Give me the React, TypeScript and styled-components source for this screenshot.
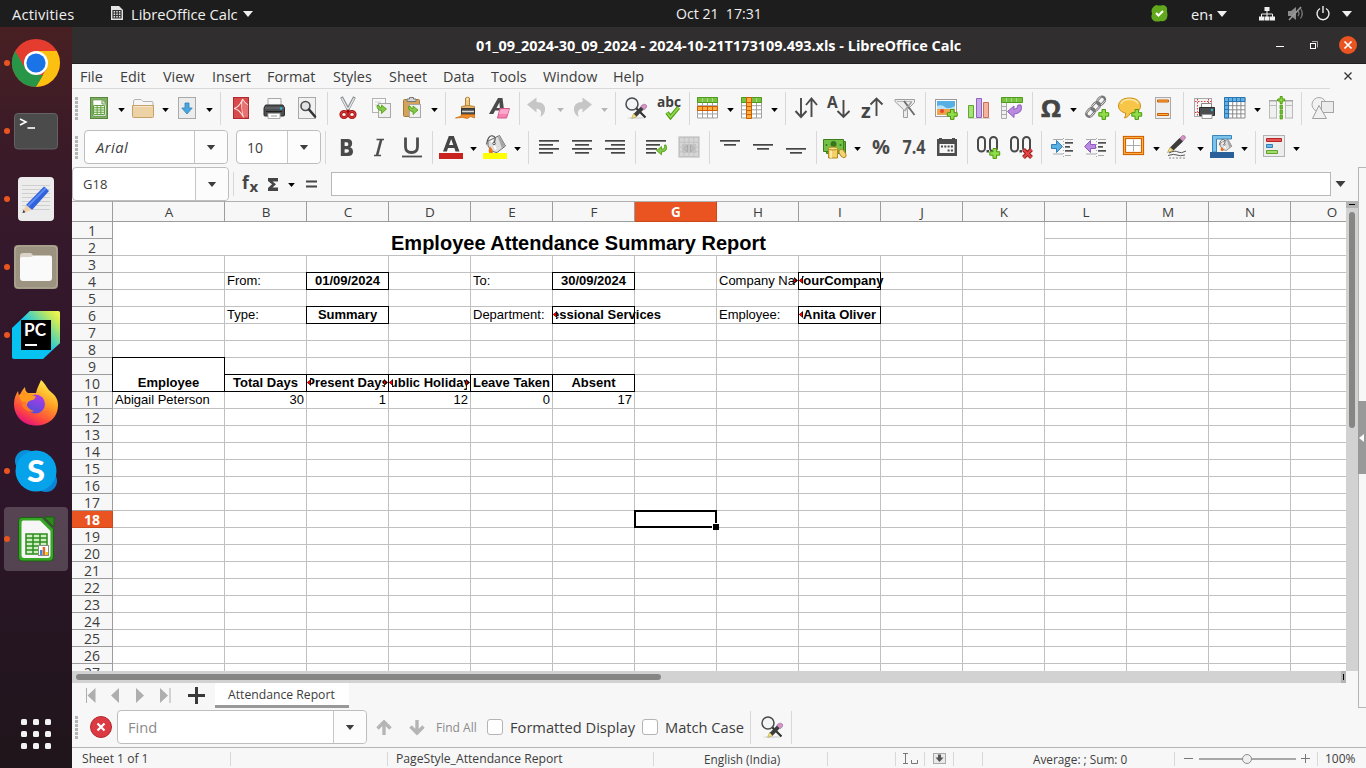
import React from 'react';
import styled, { createGlobalStyle, css } from 'styled-components';

const ui = `"Open Sans", "Noto Sans", sans-serif`;
const ink = '#3d3d3d';
const line = '#c0c0c0';
const chrome = '#f7f7f7';
const orange = '#e95420';

const Global = createGlobalStyle`
  * { box-sizing: border-box; }
  body { margin: 0; background: #f7f7f7; overflow: hidden; font-family: ${ui}; }
  svg { display: block; flex: none; overflow: visible; }
`;

/* ---------- shell ---------- */
const Screen = styled.div`
  width: 1366px;
  height: 768px;
  display: flex;
  flex-direction: column;
  overflow: hidden;
`;
const Label = styled.span<{ $w: number; $size?: number; $ls?: number; $ml?: number; $color?: string; $bold?: boolean; $italic?: boolean }>`
  flex: none;
  width: ${p => p.$w}px;
  margin-left: ${p => p.$ml ?? 0}px;
  font-size: ${p => p.$size ?? 14.67}px;
  letter-spacing: ${p => p.$ls ?? 0}px;
  color: ${p => p.$color ?? ink};
  font-weight: ${p => (p.$bold ? 700 : 400)};
  font-style: ${p => (p.$italic ? 'italic' : 'normal')};
  white-space: nowrap;
`;
const TopBar = styled.header`
  height: 27px;
  flex: none;
  background: #1d1d1d;
  display: flex;
  align-items: center;
`;
const Slot = styled.span<{ $ml?: number; $drop?: number }>`
  margin-left: ${p => p.$ml ?? 0}px;
  padding-top: ${p => p.$drop ?? 0}px;
  flex: none;
  display: flex;
`;
const Desktop = styled.div`
  flex: 1;
  display: flex;
  min-height: 0;
`;
const Dock = styled.nav`
  width: 72px;
  flex: none;
  padding-top: 4px;
  display: flex;
  flex-direction: column;
  gap: 4px;
  background: linear-gradient(180deg, #482023 0%, #3c1b27 14%, #34182b 30%, #2f162b 60%, #241520 85%, #20151b 100%);
`;
const DockItem = styled.div<{ $active?: boolean; $last?: boolean }>`
  width: 64px;
  height: 64px;
  margin-left: 4px;
  margin-top: ${p => (p.$last ? 'auto' : 0)};
  margin-bottom: ${p => (p.$last ? 2 : 0)}px;
  border-radius: 4px;
  background: ${p => (p.$active ? 'rgba(255,255,255,.2)' : 'none')};
  display: flex;
  align-items: center;
  justify-content: center;
  position: relative;
`;
const RunDot = styled.i`
  position: absolute;
  left: 0;
  top: 29px;
  width: 6px;
  height: 6px;
  border-radius: 50%;
  background: ${orange};
`;
const Window = styled.main`
  flex: 1;
  min-width: 0;
  background: ${chrome};
  display: flex;
  flex-direction: column;
`;
const TitleBar = styled.div`
  height: 37px;
  flex: none;
  background: #302e2f;
  border-bottom: 1px solid #211f20;
  display: flex;
  align-items: center;
`;
const CloseButton = styled.span`
  width: 18px;
  height: 18px;
  margin-left: 18px;
  border-radius: 50%;
  background: ${orange};
  display: flex;
  align-items: center;
  justify-content: center;
`;
const MenuBar = styled.div`
  height: 24px;
  flex: none;
  display: flex;
  align-items: center;
`;
const MenuRule = styled.div`
  height: 1px;
  width: 1258px;
  flex: none;
  background: #d9d9d9;
`;

/* ---------- toolbars ---------- */
const Toolbar = styled.div<{ $h: number }>`
  height: ${p => p.$h}px;
  flex: none;
  display: flex;
  align-items: center;
`;
const Grip = styled.i`
  width: 3px;
  height: 23px;
  margin: 0 0 0 3px;
  flex: none;
  background: repeating-linear-gradient(180deg, #b5b5b5 0 3px, transparent 3px 4px);
`;
const Group = styled.div<{ $first?: number }>`
  height: 33px;
  flex: none;
  padding: 0 8px;
  display: flex;
  align-items: center;
  gap: 9px;
  border-left: 1px solid #d8d8d8;
  ${p => p.$first !== undefined && css`border-left-color: transparent; padding-left: ${p.$first}px;`}
`;
const SplitBox = styled.span`
  width: 35px;
  margin: 0 2px 0 -2px;
  flex: none;
  display: flex;
  align-items: center;
  gap: 7px;
`;
const Combo = styled.div<{ $w: number; $ml: number; $h?: number }>`
  width: ${p => p.$w}px;
  height: ${p => p.$h ?? 34}px;
  margin-left: ${p => p.$ml}px;
  flex: none;
  background: #fff;
  border: 1px solid #bdbdbd;
  border-radius: 4px;
  display: flex;
  align-items: center;
`;
const ComboButton = styled.span<{ $w: number }>`
  width: ${p => p.$w}px;
  align-self: stretch;
  margin-left: auto;
  border-left: 1px solid #c6c6c6;
  background: #fcfcfc;
  border-radius: 0 4px 4px 0;
  display: flex;
  align-items: center;
  justify-content: center;
`;
const Body = styled.div`
  height: 541px;
  flex: none;
  display: flex;
`;
const Editor = styled.section`
  width: 1286px;
  flex: none;
  display: flex;
  flex-direction: column;
`;
const Sidebar = styled.aside`
  flex: 1;
  border: 1px solid #b6b6b6;
  border-right: 0;
  display: flex;
  align-items: center;
`;
const Handle = styled.div`
  width: 8px;
  height: 73px;
  margin: 0 0 0 -1px;
  background: #999;
  display: flex;
  align-items: center;
`;
const FormulaBar = styled.div`
  height: 34px;
  flex: none;
  display: flex;
  align-items: center;
`;
const FormulaInput = styled.div`
  width: 1000px;
  height: 24px;
  margin-left: 14px;
  flex: none;
  background: #fff;
  border: 1px solid #b8b8b8;
`;
const ThinSep = styled.i<{ $ml: number; $h?: number }>`
  width: 1px;
  height: ${p => p.$h ?? 24}px;
  margin-left: ${p => p.$ml}px;
  flex: none;
  background: #d8d8d8;
`;

/* ---------- sheet ---------- */
const SheetRow = styled.div`
  height: 470px;
  flex: none;
  display: flex;
`;
const Grid = styled.div`
  width: 1274px;
  height: 470px;
  overflow: hidden;
  flex: none;
  background: #fff;
  display: grid;
  grid-template-columns: 41px 112px repeat(14, 82px);
  grid-template-rows: 21px repeat(27, 17px);
`;
const headBox = css<{ $on?: boolean }>`
  background: ${p => (p.$on ? orange : chrome)};
  border-right: 1px solid ${p => (p.$on ? '#c9491c' : '#9c9c9c')};
  border-bottom: 1px solid ${p => (p.$on ? '#c9491c' : '#9c9c9c')};
  color: ${p => (p.$on ? '#fff' : ink)};
  font: ${p => (p.$on ? 700 : 400)} 13.5px/16px ${ui};
  text-align: center;
`;
const ColHead = styled.div<{ $on?: boolean }>`
  ${headBox}
  border-top: 1px solid #b0b0b0;
  line-height: 20px;
  font-size: 13.5px;
  padding-left: 1px;
`;
const RowHead = styled.div<{ $on?: boolean }>`
  ${headBox}
  line-height: 18px;
  font-size: 14px;
`;
const Cell = styled.div<{ $align?: string; $bold?: boolean; $box?: boolean; $merged?: 'title' | 'tall' }>`
  border-right: 1px solid ${line};
  border-bottom: 1px solid ${line};
  display: flex;
  align-items: center;
  padding: 0 2px 2px;
  justify-content: ${p => p.$align ?? 'flex-start'};
  font: ${p => (p.$bold ? 700 : 400)} 13px/15px "Liberation Sans", Arial, sans-serif;
  color: #000;
  white-space: nowrap;
  min-width: 0;
  position: relative;
  ${p => p.$box && css`
    border-color: #000;
    z-index: 1;
    &::before { content: ''; position: absolute; inset: -1px; border: 1px solid #000; border-right: 0; border-bottom: 0; }
  `}
  ${p => p.$merged === 'title' && css`
    grid-column: 2 / span 11;
    grid-row: 2 / span 2;
    font-size: 20px;
    padding: 9px 2px 0;
  `}
  ${p => p.$merged === 'tall' && css`
    grid-column: 2;
    grid-row: 10 / span 2;
    align-items: flex-end;
    padding-bottom: 1px;
  `}
`;
const CellText = styled.span<{ $clip?: string }>`
  flex: none;
  ${p => p.$clip && css`
    width: 81px;
    margin: 0 -2px;
    display: flex;
    justify-content: ${p.$clip === 'left' ? 'flex-start' : 'center'};
    padding-left: ${p.$clip === 'left' ? 2 : 0}px;
    clip-path: inset(0 ${p.$clip === 'spill' ? '-40px' : p.$clip === 'fit' ? '0' : '3px'} -2px ${p.$clip === 'left' ? 0 : 3}px);
  `}
`;
const Marker = styled.i<{ $side: 'left' | 'right' }>`
  position: absolute;
  top: 4px;
  ${p => (p.$side === 'left' ? 'left: 0;' : 'right: 0;')}
`;
const Cursor = styled.div`
  margin: -1px 0 0 -1px;
  grid-column: 8;
  grid-row: 19;
  z-index: 2;
  position: relative;
  border: 2px solid #000;
  &::after { content: ''; position: absolute; right: -4px; bottom: -4px; width: 6px; height: 6px; background: #000; border: solid #fff; border-width: 1px 0 0 1px; }
`;
const VScroll = styled.div`
  width: 12px;
  background: #d2d2d2;
`;
const VThumb = styled.div`
  width: 6px;
  height: 216px;
  margin: 4px 0 0 3px;
  border-radius: 3px;
  background: #868785;
`;
const ScrollEnd = styled.div<{ $w: number; $h: number }>`
  width: ${p => p.$w}px;
  height: ${p => p.$h}px;
  background: #b3b3b3;
  display: flex;
  align-items: center;
  justify-content: center;
`;
const Tick = styled.i<{ $w: number; $h: number }>`
  width: ${p => p.$w}px;
  height: ${p => p.$h}px;
  background: #000;
`;
const HScroll = styled.div`
  width: 1274px;
  height: 12px;
  flex: none;
  background: #d2d2d2;
  display: flex;
  align-items: center;
  justify-content: space-between;
`;
const HThumb = styled.div`
  width: 585px;
  height: 6px;
  margin-left: 4px;
  border-radius: 3px;
  background: #868785;
`;
const TabBar = styled.div`
  height: 25px;
  flex: none;
  display: flex;
  align-items: center;
`;
const Tab = styled.div`
  width: 134px;
  height: 25px;
  margin-left: 10px;
  background: #fff;
  border-bottom: 3px solid #999;
  display: flex;
  align-items: center;
`;
const FindBar = styled.div`
  height: 39px;
  flex: none;
  display: flex;
  align-items: center;
  padding-bottom: 1px;
`;
const Check = styled.span<{ $ml: number }>`
  width: 16px;
  height: 16px;
  margin-left: ${p => p.$ml}px;
  flex: none;
  background: #fff;
  border: 1px solid #b4b4b4;
  border-radius: 3px;
`;
const StatusBar = styled.footer`
  flex: 1;
  border-top: 1px solid #b4b4b4;
  display: flex;
  align-items: center;
  padding-top: 1px;
`;

/* ---------- icons ---------- */
const I = ({ children, w = 24, h = 24, vb }: { children: React.ReactNode; w?: number; h?: number; vb?: string }) => (
  <svg width={w} height={h} viewBox={vb ?? `0 0 ${w} ${h}`} fill="none">{children}</svg>
);
const Caret = ({ w = 7, h = 4, c = '#000' }: { w?: number; h?: number; c?: string }) => (
  <I w={w} h={h} vb="0 0 10 6"><path d="M0 0h10L5 6z" fill={c} /></I>
);
const Split = ({ children, dim }: { children: React.ReactNode; dim?: boolean }) => (
  <SplitBox>{children}<Slot $drop={3}><Caret c={dim ? '#b5b5b5' : '#000'} /></Slot></SplitBox>
);
const gridLines = (x: number, y: number, w: number, h: number, cols: number, rows: number) => {
  let d = `M${x} ${y}h${w}v${h}h${-w}z`;
  for (let i = 1; i < cols; i++) d += `M${x + (w / cols) * i} ${y}v${h}`;
  for (let i = 1; i < rows; i++) d += `M${x} ${y + (h / rows) * i}h${w}`;
  return d;
};
const Plus = ({ x, y }: { x: number; y: number }) => (
  <path transform={`translate(${x} ${y})`} d="M3.500.5h3.500v3.200h3.200v3.500H7v3.200H3.500V7.200H.3V3.700h3.200z" fill="#8fdc4f" stroke="#4e9a06" />
);
const NewSheet = () => <I><rect x="3.500" y="1.500" width="17" height="21" fill="#7fae62" stroke="#57863c" /><path d="M6 4h9l4 4v12H6z" fill="#fff" stroke="#4f7d38" strokeWidth=".5" /><path d="M15 4v4h4" fill="#dbe8d2" stroke="#6d9956" /><path d={gridLines(6.5, 9.5, 11, 9, 3, 4)} fill="#eef7e8" stroke="#62a03f" /></I>;
const Folder = () => <I><path d="M2.500 20V4.500L4 3.500h6l2 2h9q1 0 1 1V20" fill="#f6f6f6" stroke="#b3b3b3" /><path d="M1.500 9.500h21v11q0 1-1 1h-19q-1 0-1-1z" fill="#ecd2a5" stroke="#c6a06a" /><path d="M3 10.500h18" stroke="#f8e8cb" /></I>;
const Save = () => <I><rect x="3.500" y="1.500" width="17" height="21" fill="#ececec" stroke="#a9a9a9" /><path d="M10 7h4v5h3.200L12 18 6.800 12H10z" fill="#4aa6dd" stroke="#2f84bd" strokeWidth=".8" /></I>;
const Pdf = () => <I><rect x="4.500" y="1.500" width="15" height="21" fill="#d94b4b" stroke="#b02a2e" /><path d="M5 12.500q5-1 8.500-9M5 12.500q5.500 1 9 8M13.500 3q-2 9 1.500 18.500M13.500 3q2 4 5.500 6" stroke="#fbe3e3" strokeWidth="1.100" /><path d="M14 4q-2 9 1 17h4V9q-3.500-1-5-5z" fill="#e77272" /></I>;
const Printer = () => <I><path d="M6 2.500h13V11H6z" fill="#f8f8f8" stroke="#a8a8a8" /><path d="M3.500 9h17.500l1.500 3v7q0 1-1 1H3q-1 0-1-1v-7z" fill="#4c4f50" stroke="#2c2c2c" /><path d="M3 12h19" stroke="#737678" /><path d="M4 15.500h16" stroke="#222" /><circle cx="19" cy="12.500" r="1.200" fill="#33b5e5" /><path d="M6 17.500h12v5H6z" fill="#fff" stroke="#aaa" /><path d="M9 20h6" stroke="#999" /></I>;
const Preview = () => <I><rect x="3.500" y="1.500" width="17" height="21" fill="#f1f1f1" stroke="#a9a9a9" /><circle cx="10.500" cy="10" r="4.500" fill="#dfe3e5" stroke="#4d4d4d" strokeWidth="1.600" /><path d="M14 13.500l6 7" stroke="#333" strokeWidth="2.600" strokeLinecap="round" /></I>;
const Cut = () => <I><path d="M5.500 1l7.500 14M18.500 1L11 15" stroke="#8a8f91" strokeWidth="3" /><path d="M5.800 2l6.400 12M18.200 2l-6.400 12" stroke="#e8eaeb" strokeWidth="1.300" /><path d="M11 14.500l2 1" stroke="#a40000" strokeWidth="3" /><ellipse cx="8" cy="18.500" rx="3.200" ry="3" stroke="#a81414" strokeWidth="2.800" /><ellipse cx="16" cy="18.500" rx="3.200" ry="3" stroke="#a81414" strokeWidth="2.800" /><ellipse cx="8" cy="18.500" rx="3.200" ry="3" stroke="#e04040" /><ellipse cx="16" cy="18.500" rx="3.200" ry="3" stroke="#e04040" /></I>;
const GreenTurn = ({ x, y }: { x: number; y: number }) => <path transform={`translate(${x} ${y})`} d="M.5 1Q.5 6 5 6V9L10 4.500 5 .5V3Q3 3.500 2.500 1z" fill="#82c94d" stroke="#4e9a06" strokeWidth=".8" />;
const Copy = () => <I><rect x="3.500" y="2.500" width="13" height="14" fill="#fafafa" stroke="#b2b2b2" /><path d="M6 6h6M6 9h6" stroke="#d0d0d0" /><rect x="9.500" y="7.500" width="12" height="14" fill="#f0f0f0" stroke="#a8a8a8" /><GreenTurn x={7.500} y={8.500} /></I>;
const Paste = () => <I><rect x="3.500" y="3.500" width="16" height="17" rx="1" fill="#d3a25c" stroke="#a9793a" /><path d="M7 5.500V3h2.500V1.500h4V3H16v2.500z" fill="#d5d5d5" stroke="#777" /><rect x="9.500" y="8.500" width="11" height="13" fill="#f0f0f0" stroke="#a8a8a8" /><GreenTurn x={8} y={9.500} /></I>;
const Brush = () => <I><path d="M11.500 2q2-1.500 4 0v8h-4z" fill="#f1c987" stroke="#b78237" /><circle cx="13.500" cy="3" r=".8" fill="#fff" /><path d="M7.500 10.500q6-2 13 0v4h-13z" fill="#e9b96e" stroke="#b78237" /><path d="M7.500 12.500h13v6h-13z" fill="#4b4b4b" stroke="#333" /><path d="M8 15.500h12" stroke="#d9d9d9" strokeWidth="1.500" /><path d="M7.500 18.500h13V22l-4-1.500-3 2-5-1-7 .5q2-1 5-1.500z" fill="#f08b25" stroke="#c66a0a" strokeWidth=".7" /></I>;
const ClearFormat = () => <I><path fillRule="evenodd" d="M2 18L11 2h4.500l2 16h-4l-.4-3.500H8.200L6.300 18zM9.500 12h3.400l-.5-5.500z" fill="#4a4a4a" /><path d="M13 12.500h9.500l-3 9.500h-9z" fill="#f583b1" stroke="#d6568c" /><path d="M13.500 13.500l-1.600 4.500h8.600l1.500-4.800z" fill="#fba9ca" /></I>;
const Undo = () => <I><path d="M1 8.500L10.500 1.500v4.500q9 0 8.500 8-.3 4-4.500 7 2.500-8-4-8.500v4z" fill="#c6c6c6" /></I>;
const Redo = () => <I><g transform="matrix(-1 0 0 1 23 0)"><path d="M1 8.500L10.500 1.500v4.500q9 0 8.500 8-.3 4-4.500 7 2.500-8-4-8.500v4z" fill="#c6c6c6" /></g></I>;
const FindReplace = () => <I><ellipse cx="12" cy="22" rx="9" ry="1.200" fill="#dedede" /><circle cx="8" cy="8" r="6" fill="#f2f4f5" stroke="#4a4a4a" strokeWidth="1.500" /><path d="M12.500 12.500l9 9" stroke="#333" strokeWidth="2.200" /><path d="M9.500 18L17 10.500l2.800 2.800L12.300 21z" fill="#3c3c3c" /><path d="M9.500 17.500l3 3.200-4.800 1.800z" fill="#f4e28b" stroke="#a58b2e" strokeWidth=".5" /><path d="M18 9q3.500-2 4.800 1-.5 2.800-2.300 3.600L16.800 10.500z" fill="#d595c7" stroke="#9b5b8e" strokeWidth=".6" /></I>;
const Spell = () => <I><text x="0" y="11" fontFamily="Open Sans" fontWeight="700" fontSize="14" textLength="24" lengthAdjust="spacingAndGlyphs" fill="#3f3f3f">abc</text><path d="M10 16.500l3.500 4.500 8-9.500" stroke="#4e9a06" strokeWidth="4" /><path d="M10 16.500l3.500 4.500 8-9.500" stroke="#8ad552" strokeWidth="2" /></I>;
const GreenTable = ({ mode }: { mode: 'row' | 'col' }) => <I><rect x="1" y="1.500" width="21" height="21" fill="#fff" /><path d={gridLines(1.500, 1.500, 20, 20.500, 4, 5)} stroke="#a0a0a0" /><path d="M1.500 1.500h20v5h-20z" fill="#79c142" stroke="#4f9a1d" /><path d="M6.500 2v4M11.500 2v4M16.500 2v4" stroke="#a5dc7a" />{mode === 'row' ? <><path d="M1.500 10.500h20v4h-20z" fill="#fcaf3e" stroke="#ce5c00" /><path d="M6.500 10.500v4M11.500 10.500v4M16.500 10.500v4" stroke="#ce5c00" /></> : <><path d="M6.500 1.500h5v21h-5z" fill="#fcaf3e" stroke="#ce5c00" /><path d="M6.500 6.500h5M6.500 10.500h5M6.500 14.500h5M6.500 18.500h5" stroke="#ce5c00" /></>}</I>;
const SortBoth = () => <I><path d="M7 2v19M1.500 15L7 21l5.500-6M17.500 21V3M12 9l5.500-6.500L23 9" stroke="#4a4a4a" strokeWidth="1.900" /></I>;
const SortAsc = () => <I><text x="0" y="12" fontFamily="Open Sans" fontWeight="700" fontSize="15.500" fill="#454545">A</text><path d="M16.500 4v17M10.500 15l6 6 6-6" stroke="#4a4a4a" strokeWidth="1.900" /></I>;
const SortDesc = () => <I><text x="1" y="21.500" fontFamily="Open Sans" fontWeight="700" fontSize="20" fill="#454545">z</text><path d="M16.500 20V2.500M10.500 8.500l6-6 6 6" stroke="#4a4a4a" strokeWidth="1.900" /></I>;
const Filter = () => <I><path d="M2 3.500h19.500v3l-7 7v8h-4v-8l-8.500-8z" fill="#ededed" stroke="#9f9f9f" /><path d="M4 5.500h15" stroke="#b8b8b8" /><path d="M11 5l10.500 14" stroke="#6c6c6c" strokeWidth="1.900" /><path d="M18.500 6l-7 9" stroke="#a2a2a2" strokeWidth="1.600" /></I>;
const Picture = () => <I><rect x="1.500" y="3.500" width="21" height="17" fill="#fff" stroke="#9a9a9a" /><rect x="3" y="5" width="18" height="8" fill="#56b0e3" /><path d="M3 10q5-2 8 1t10-1v4H3z" fill="#b9e1f5" /><rect x="3" y="13" width="18" height="6" fill="#eda44b" /><circle cx="8" cy="15" r="2" fill="#e6462e" /><Plus x={13} y={13} /></I>;
const Chart = () => <I><path d="M1.500 9.500h5v12h-5z" fill="#a6e07b" stroke="#5faa2b" /><path d="M9.500 2.500h5v19h-5z" fill="#c8a6ea" stroke="#8f63c0" /><path d="M16.500 6.500h5v15h-5z" fill="#f2b3a1" stroke="#cc6f57" /><path d="M1 22.500h22" stroke="#d5d5d5" /></I>;
const Pivot = () => <I><path d={gridLines(1.500, 6.500, 5, 16, 1, 4)} fill="#f1f1f1" stroke="#aaa" /><path d="M1.500 1.500h21v5h-21z" fill="#79c142" stroke="#4f9a1d" /><path d="M6.500 2v4M11.500 2v4M16.500 2v4" stroke="#a5dc7a" /><path d="M21 9q2.500 8-7 9v3.500L7.500 15.500 14 10v3.500q4-.5 4-4.500z" fill="#b98ae0" stroke="#8e5cbf" /></I>;
const Omega = () => <I><text x="2" y="21" fontFamily="Open Sans" fontWeight="700" fontSize="24" textLength="20" lengthAdjust="spacingAndGlyphs" fill="#454545" stroke="#454545" strokeWidth=".6">Ω</text></I>;
const Link = () => <I><g transform="rotate(-48 11 11)"><rect x="-1.500" y="7.500" width="9.500" height="6" rx="3" stroke="#777" strokeWidth="2.400" /><rect x="6.500" y="7.500" width="9.500" height="6" rx="3" stroke="#777" strokeWidth="2.400" /><rect x="14.500" y="7.500" width="9" height="6" rx="3" stroke="#777" strokeWidth="2.400" /><path d="M0 7.500h6M8 7.500h6M16 7.500h6M0 13.500h6M8 13.500h6M16 13.500h6" stroke="#e2e2e2" strokeWidth=".9" /></g><Plus x={13.500} y={13} /></I>;
const Comment = () => <I><path d="M11.500 2C18 2 22.500 5 22.500 10S18 17.500 12 17.500c-1 2.500-3 4-5.500 4.500q1.500-2 1-5C3 16 .5 13.500.5 10 .5 5 5 2 11.500 2z" fill="#f7c548" stroke="#c99016" /><path d="M3 8q2-5 9-4.500T20 8" stroke="#fce69f" strokeWidth="1.500" /><Plus x={13.500} y={13} /></I>;
const HeaderFooter = () => <I><rect x="4.500" y="1.500" width="15" height="21" fill="#eee" stroke="#a9a9a9" /><path d="M6.500 4h11v2h-11zM6.500 17.500h11v2h-11z" fill="#fcaf3e" stroke="#ce5c00" /></I>;
const PrintArea = () => <I><rect x="2.500" y="2.500" width="17" height="18" fill="#f4f4f4" stroke="#a9a9a9" /><path d="M3 5.500h17M5.500 3v17M3 16.500h6M16.500 3v4" stroke="#e03b3b" strokeDasharray="1.500 1.500" /><path d="M9.500 7.500h10v4h-10z" fill="#fafafa" stroke="#888" /><path d="M7.500 11.500h15v8h-15z" fill="#4c4f50" stroke="#2c2c2c" /><circle cx="20" cy="14" r="1.200" fill="#33b5e5" /><path d="M10 18.500h10v4H10z" fill="#fff" stroke="#999" /></I>;
const Freeze = () => <I><path d={gridLines(1.500, 1.500, 20.500, 20.500, 5, 5)} fill="#fff" stroke="#8a8a8a" /><path d="M1.500 1.500h20.500v4h-16.500v16.500h-4z" fill="#63b1e4" stroke="#2a76b5" /><path d="M5.500 1.500v4M9.500 1.500v4M13.500 1.500v4M17.500 1.500v4M1.500 5.500h4M1.500 9.500h4M1.500 13.500h4M1.500 17.500h4" stroke="#2a76b5" /></I>;
const SplitWin = () => <I><path d="M0 4.500h8v18H0zM16.500 4.500H24v18h-7.500z" fill="#f0f0f0" /><path d="M.5 4v18.500M7.500 4v18.500M16.500 4v18.500M23.500 4v18.500M0 9.500h8M16 9.500h8M0 22h8M16 22h8" stroke="#bbb" /><path d="M0 4h8v1.500H0zM16 4h8v1.500h-8z" fill="#a5a5a5" /><path d="M11 9h2.500v4H11zM11 14h2.500v4H11zM11 19h2.500v4H11z" fill="#6fc23a" stroke="#4e9a06" strokeWidth=".7" /><path d="M11.200 .5h2v2.500h2.500v2h-2.500V7.500h-2V5H8.700V3h2.500z" fill="#8fdc4f" stroke="#4e9a06" /></I>;
const Shapes = () => <I><circle cx="9" cy="8.500" r="7" fill="#f2f2f2" stroke="#a9a9a9" /><rect x="11.500" y="5.500" width="12" height="11" fill="#ececec" stroke="#a5a5a5" /><path d="M9 9.500L16.500 22.500h-14z" fill="#f1f1f1" stroke="#a0a0a0" /></I>;
const Bold = () => <I><path transform="translate(2.200 1.200) scale(.84 .94)" fillRule="evenodd" d="M5.500 3h8q5.500 0 5.500 4.700 0 3-2.500 4 3.500 1 3.500 4.800Q20 21 14 21H5.500zM10 6.500v4h2.500q2 0 2-2t-2-2zM10 13.800v3.700h3q2.200 0 2.200-1.900T13 13.800z" fill="#4a4a4a" /></I>;
const Italic = () => <I><path d="M9.500 4.500h7.500M7 20.500h7" stroke="#4d4d4d" strokeWidth="1.600" /><path d="M14.200 4.500L10 20.500" stroke="#4d4d4d" strokeWidth="2.600" /></I>;
const Underline = () => <I><path d="M5.500 2.500v9q0 6 6 6t6-6v-9" stroke="#4d4d4d" strokeWidth="2.800" /><path d="M2 21.500h20" stroke="#4d4d4d" strokeWidth="1.800" /></I>;
const Bar = ({ c }: { c: string }) => <rect x="0" y="18" width="24" height="6" fill={c} />;
const FontColor = () => <I><path fillRule="evenodd" d="M4 16.500L9.800 1h5L20.500 16.500h-4L15.400 13H9l-1.100 3.500zM10 10h4.300L12.200 4z" fill="#454545" /><Bar c="#c9211e" /></I>;
const Bucket = () => <g><path d="M5 6L16.500.5l6 10.500-8.500 6.500q-5 0-9-6.500z" fill="#dedede" stroke="#6b6b6b" /><path d="M15 2l3 .5 4 8-3 3z" fill="#a5a5a5" /><path d="M8.500 5.500l4.500 9" stroke="#fff" strokeWidth="2" /><path d="M3.500 9.500Q5 0 9.500.8T11 8" stroke="#555" strokeWidth="1.200" /><circle cx="11" cy="8.500" r="1.300" fill="#eee" stroke="#555" /><path d="M6.800 11.500q-2 3.500-.5 6.500h3.500q.5-3.500-3-6.500z" fill="#e6741d" /></g>;
const FillColor = () => <I><Bucket /><Bar c="#ffff00" /></I>;
const Lines = ({ rows, c = '#454545' }: { rows: [number, number, number][]; c?: string }) => <>{rows.map(([x, y, w]) => <rect key={y} x={x} y={y} width={w} height="1.700" fill={c} />)}</>;
const AlignL = () => <I><Lines rows={[[2, 5, 20], [2, 9, 14], [2, 13, 20], [2, 17, 14]]} /></I>;
const AlignC = () => <I><Lines rows={[[2, 5, 20], [5, 9, 14], [2, 13, 20], [5, 17, 14]]} /></I>;
const AlignR = () => <I><Lines rows={[[2, 5, 20], [8, 9, 14], [2, 13, 20], [8, 17, 14]]} /></I>;
const Wrap = () => <I><Lines rows={[[2, 5, 20], [2, 9, 14], [2, 13, 11], [2, 17, 10]]} /><path d="M20.500 10q1 4-3 4.300v-2.800L12.500 15.500l5 4.300v-2.800q7-.5 4.500-7z" fill="#82c94d" stroke="#4e9a06" strokeWidth=".8" /></I>;
const Merge = () => <I><rect x="1" y="1" width="22" height="22" rx="1" fill="#d6d6d6" /><path d={gridLines(2.500, 2.500, 19, 19, 4, 4)} stroke="#c2c2c2" /><rect x="5" y="9" width="14" height="9" fill="#c3c3c3" /><path d="M10.500 10v7l-3.500-3.500zM13.500 10v7l3.500-3.500z" stroke="#a9a9a9" /></I>;
const VTop = () => <I><Lines rows={[[2, 5, 20], [6, 9, 12]]} /></I>;
const VMid = () => <I><Lines rows={[[2, 9, 20], [6, 13, 12]]} /></I>;
const VBot = () => <I><Lines rows={[[2, 13, 20], [6, 17, 12]]} /></I>;
const Currency = () => <I><path d="M3.500 6.500h19v12h-19z" fill="#5fae34" stroke="#3d7d1b" /><path d="M.5 4.500h20v12H.5z" fill="#73c044" stroke="#3d7d1b" /><circle cx="10.500" cy="9" r="3" fill="#38761d" /><circle cx="3.500" cy="10" r="1" fill="#38761d" /><circle cx="17.500" cy="10" r="1" fill="#38761d" /><path d="M5.500 13.500h9v9.500h-9z" fill="#f2d16b" stroke="#b38a1d" /><path d="M8 14v9" stroke="#fff2b8" strokeWidth="1.500" /><ellipse cx="10" cy="13.500" rx="4.500" ry="1.500" fill="#f7e08c" stroke="#b38a1d" /><ellipse cx="19.500" cy="18.500" rx="2.700" ry="4.500" transform="rotate(-35 19.500 18.500)" fill="#f3d477" stroke="#b38a1d" /></I>;
const GlyphText = ({ t, size, y, w }: { t: string; size: number; y: number; w: number }) => <text x={(24 - w) / 2} y={y} fontFamily="Open Sans" fontWeight="700" fontSize={size} textLength={w} lengthAdjust="spacingAndGlyphs" fill="#4a4a4a">{t}</text>;
const Percent = () => <I><GlyphText t="%" size={20} y={19} w={18} /></I>;
const NumberFmt = () => <I><GlyphText t="7.4" size={19} y={19} w={23} /></I>;
const DateFmt = () => <I><path fillRule="evenodd" d="M2 4h2V3h3v1h10V3h3v1h2v17H2zM4.500 9v9h15V9z" fill="#4d4d4d" /><path d="M6 10.500h2v2H6zM9.300 10.500h2v2h-2zM12.600 10.500h2v2h-2zM15.900 10.500h2v2h-2zM12.600 14.500h2v2h-2zM15.900 14.500h2v2h-2z" fill="#4d4d4d" /></I>;
const Zeros = () => <><rect x="2" y="2" width="7" height="14.500" rx="3.500" stroke="#4a4a4a" strokeWidth="2" /><rect x="14" y="2" width="7" height="14.500" rx="3.500" stroke="#4a4a4a" strokeWidth="2" /><rect x="10.500" y="15" width="2.500" height="2.500" fill="#4a4a4a" /></>;
const AddDec = () => <I><Zeros /><Plus x={13.500} y={13} /></I>;
const RedX = ({ x, y }: { x: number; y: number }) => <g transform={`translate(${x} ${y})`}><path d="M0 0l8 8M8 0L0 8" stroke="#a01818" strokeWidth="4" /><path d="M0 0l8 8M8 0L0 8" stroke="#e04848" strokeWidth="2" /></g>;
const DelDec = () => <I><Zeros /><RedX x={14.500} y={14.500} /></I>;
const IndentIn = () => <I><path d="M1.500 9.500h5v-4l6 6-6 6v-4h-5z" fill="#5ab0e2" stroke="#2f7fb8" /><Lines c="#4f4f4f" rows={[[15, 7, 8], [15, 11, 5], [15, 15, 8]]} /><path d="M3 4.500h10M3 19h10M15 4.500h8M15 20.500h6" stroke="#aaa" /><path d="M13.500 3v19" stroke="#aaa" strokeDasharray="1 2" /></I>;
const IndentOut = () => <I><path d="M12.500 9.500h-5v-4l-6 6 6 6v-4h5z" fill="#b98ae0" stroke="#8e5cbf" /><Lines c="#4f4f4f" rows={[[15, 7, 8], [15, 11, 5], [15, 15, 8]]} /><path d="M3 4.500h10M3 19h10M15 4.500h8M15 20.500h6" stroke="#aaa" /><path d="M13.500 3v19" stroke="#aaa" strokeDasharray="1 2" /></I>;
const Borders = () => <I><rect x="2.500" y="2.500" width="18" height="16" fill="#fff" stroke="#ce5c00" strokeWidth="3.200" /><rect x="2.500" y="2.500" width="18" height="16" stroke="#fcaf3e" strokeWidth="1.200" /><path d="M11.500 4.500v12M4.500 10.500h14" stroke="#aaa" /></I>;
const LineStyle = () => <I><path d="M4 12.500L13.500 3l3.500 3.500-9.500 9z" fill="#3c3c3c" /><path d="M4 12.500l3.500 3-6 2z" fill="#f4e28b" stroke="#a58b2e" strokeWidth=".6" /><path d="M14 3l2.500-2.500q3-.5 3 2.500L17 6z" fill="#d595c7" stroke="#9b5b8e" strokeWidth=".6" /><path d="M3 18q6-3 9-1t8-1M2 20.500q6-2 9-.5t8 0" stroke="#555" /><path d="M3 23h17" stroke="#888" strokeDasharray="2 1.500" /></I>;
const BorderColor = () => <I><path d="M2.500 .5h19v3.500H6.500V17h-4z" fill="#7cc3ec" stroke="#3a86bb" /><g transform="translate(7 4) scale(.66)"><Bucket /></g><rect x="0" y="17" width="24" height="6" fill="#2a6099" /></I>;
const CondFmt = () => <I><rect x="1.500" y=".5" width="21" height="21" fill="#ececec" stroke="#b3b3b3" /><path d="M4.500 3.500h15v3h-15z" fill="#e55353" stroke="#b32626" /><path d="M4.500 9.500h6v3h-6z" fill="#6cb5e4" stroke="#2f7fb8" /><path d="M4.500 15.500h11v3h-11z" fill="#a3dc6a" stroke="#5fa52b" /></I>;

/* ---------- dock artwork ---------- */
const ChromeIcon = () => <I w={48} h={48}><circle cx="24" cy="24" r="24" fill="#e53c30" /><path d="M24 12h20.800A24 24 0 0 1 23.600 48L34.400 30z" fill="#fcc010" /><path d="M24 48A24 24 0 0 1 3.200 12L13.600 30 24 36h7z" fill="#279647" /><circle cx="24" cy="24" r="12" fill="#fff" /><circle cx="24" cy="24" r="9.600" fill="#1b73e8" /></I>;
const TerminalIcon = () => <I w={44} h={37}><rect x=".5" y=".5" width="43" height="35.500" rx="3.500" fill="#4b4b4b" stroke="#636363" /><path d="M6 6l6 3-6 3" stroke="#fff" strokeWidth="1.600" /><path d="M13.500 15h7.500" stroke="#fff" strokeWidth="1.600" /></I>;
const EditorIcon = () => <I w={38} h={46}><rect x="1" y="1" width="36" height="44" rx="4" fill="#ececec" /><path d="M5 9.500h28M5 13.500h28M5 17.500h28M5 21.500h28M5 25.500h28M5 29.500h28M5 33.500h28" stroke="#cfcfcf" /><path d="M9 29L27 10.500l5 4.500-17 19z" fill="#2f63dc" /><path d="M11 30l18-18" stroke="#5f8df2" strokeWidth="2" /><path d="M9 29l6 5-9.500 3z" fill="#f0cfae" /><path d="M6.500 34l2 2.200-3 .8z" fill="#333" /></I>;
const FilesIcon = () => <I w={44} h={44}><rect width="44" height="44" rx="4" fill="#9b937f" /><rect x="1" y="1" width="42" height="42" rx="4" stroke="#b3ac98" /><path d="M6 11q0-3 3-3h8l4 4h15q2 0 2 2v4H6z" fill="#d9d4c7" /><path d="M6 14q0-2 2-2h9l3-1.500h16q2 0 2 2V33q0 3-3 3H9q-3 0-3-3z" fill="#fafafa" /></I>;
const PyCharmIcon = () => <I w={48} h={48}><defs><linearGradient id="pc" x1="1" y1="0" x2=".35" y2=".6"><stop offset="0" stopColor="#fcf84a" /><stop offset=".3" stopColor="#c5ea5c" /><stop offset="1" stopColor="#07c3f2" /></linearGradient></defs><path d="M18 0h28q2 0 2 2v30L31 48H2q-2 0-2-2V17z" fill="#07c3f2" /><path d="M18 0h28q2 0 2 2v30l-9 8V9H9z" fill="url(#pc)" /><rect x="9" y="9" width="30" height="30" fill="#000" /><text x="12" y="24.500" fontFamily="Lato" fontWeight="700" fontSize="16.500" textLength="22" lengthAdjust="spacingAndGlyphs" fill="#fff">PC</text><rect x="13" y="33" width="12" height="2" fill="#fff" /></I>;
const FirefoxIcon = () => <I w={46} h={48}><defs><linearGradient id="ff" x1=".8" y1=".05" x2=".3" y2="1"><stop offset="0" stopColor="#fff04a" /><stop offset=".4" stopColor="#ffa024" /><stop offset=".75" stopColor="#ff4a3d" /><stop offset="1" stopColor="#e3107f" /></linearGradient><linearGradient id="globe" x1=".7" y1="0" x2=".3" y2="1"><stop offset="0" stopColor="#b13ae8" /><stop offset="1" stopColor="#4e4fd8" /></linearGradient></defs><path d="M28 1c5 4 6 9 10 12 4 3 7 7 7 13C45 39 35 46.500 23 46.500S1 38 1 25c0-6 2-10 4-13l1 5c2-3 3-6 6-9 0 3 1 5 3 6h8c1-5 3-8 5-13z" fill="url(#ff)" /><circle cx="22.500" cy="25" r="9.500" fill="url(#globe)" /><path d="M6 16c5-3 10-1 17 1.500l-2 3c-4 1-7 2-7 5.500-4-1-7-5-8-10z" fill="#ff9a1f" /><path d="M13 23q1 8 8.500 9-6 2-10-2t-1-8z" fill="#ff7a22" /></I>;
const SkypeIcon = () => <I w={44} h={44}><circle cx="12" cy="12" r="11" fill="#0a8fd8" /><circle cx="32" cy="32" r="11" fill="#0b84d4" /><circle cx="22" cy="22" r="20.500" fill="#06a3ea" /><text x="13" y="32.500" fontFamily="Lato" fontWeight="900" fontSize="31" textLength="18" lengthAdjust="spacingAndGlyphs" fill="#fff">S</text></I>;
const CalcIcon = () => <I w={38} h={46}><path d="M5 1.500h20L36.500 13v28q0 4-4 4H5q-3.500 0-3.500-4V5q0-3.500 3.500-3.500z" fill="#37a525" stroke="#1d5f12" /><path d="M6 4.500h17L33.500 15v24q0 3-3 3H7q-2.500 0-2.500-3V7Q4.500 4.500 6 4.500z" fill="#f6f6f6" /><path d="M27 1h10v10z" fill="#2c8a1d" stroke="#1d5f12" /><path d={gridLines(9, 18, 21, 20, 3, 5)} fill="#ccf0c0" stroke="#2e8b1f" strokeWidth="1.500" /><rect x="21.500" y="29.500" width="10" height="10" fill="#fff" stroke="#888" /><path d="M23 34h2.500v5H23z" fill="#3a8fd0" /><path d="M25.700 31h2.500v8h-2.500z" fill="#e0672a" /><path d="M28.500 36h2.500v3h-2.500z" fill="#f5c211" /></I>;
const AppsIcon = () => <I w={30} h={30}>{[0, 12, 24].flatMap(x => [0, 12, 24].map(y => <rect key={`${x}-${y}`} x={x} y={y} width="6" height="6" rx="1.500" fill="#f2f2f2" />))}</I>;

/* ---------- data ---------- */
const menu: [string, number][] = [
  ['File', 40], ['Edit', 43], ['View', 49], ['Insert', 55], ['Format', 66], ['Styles', 56],
  ['Sheet', 54], ['Data', 48], ['Tools', 52], ['Window', 70], ['Help', 700],
];
const columns = 'ABCDEFGHIJKLMNO'.split('');
type CellDef = { t: string; bold?: boolean; box?: boolean; align?: string; clip?: string; marks?: ('left' | 'right')[] };
const head = { bold: true, box: true, align: 'center' };
const num = { align: 'flex-end' };
const cells: Record<string, CellDef> = {
  B4: { t: 'From:' }, C4: { t: '01/09/2024', ...head }, E4: { t: 'To:' }, F4: { t: '30/09/2024', ...head },
  H4: { t: 'Company Name:', clip: 'left', marks: ['right'] }, I4: { t: 'YourCompany', ...head, clip: 'spill', marks: ['left'] },
  B6: { t: 'Type:' }, C6: { t: 'Summary', ...head }, E6: { t: 'Department:' }, F6: { t: 'Professional Services', ...head, clip: 'spill', marks: ['left'] },
  H6: { t: 'Employee:' }, I6: { t: 'Anita Oliver', ...head, clip: 'fit', marks: ['left'] },
  B10: { t: 'Total Days', ...head }, C10: { t: 'Present Days', ...head, clip: 'both', marks: ['left', 'right'] },
  D10: { t: 'Public Holidays', ...head, clip: 'both', marks: ['left', 'right'] }, E10: { t: 'Leave Taken', ...head }, F10: { t: 'Absent', ...head },
  A11: { t: 'Abigail Peterson' }, B11: { t: '30', ...num }, C11: { t: '1', ...num }, D11: { t: '12', ...num }, E11: { t: '0', ...num }, F11: { t: '17', ...num },
};
const ArrowMark = ({ side }: { side: 'left' | 'right' }) => (
  <Marker $side={side}>
    <I w={4} h={7}>{side === 'left' ? <><path d="M4 0v7L0 3.500z" fill="#000" /><path d="M3.200 1.200v4.600L0 3.500z" fill="#f00000" /></> : <><path d="M0 0v7l4-3.500z" fill="#000" /><path d="M0 1.200v4.600L1.800 3.500z" fill="#f00000" /></>}</I>
  </Marker>
);

const Sheet = () => (
  <Grid>
    <ColHead />
    {columns.map(c => <ColHead key={c} $on={c === 'G'}>{c}</ColHead>)}
    <Cell $merged="title" $bold $align="center">Employee Attendance Summary Report</Cell>
    <Cell $merged="tall" $bold $box $align="center">Employee</Cell>
    <Cursor />
    {Array.from({ length: 27 }, (_, i) => i + 1).map(r => (
      <React.Fragment key={r}>
        <RowHead $on={r === 18} style={{ gridRow: r + 1, gridColumn: 1 }}>{r}</RowHead>
        {columns.map((c, i) => {
          if (r < 3 && i < 11) return null;
          if ((r === 9 || r === 10) && i === 0) return null;
          const d = cells[c + r];
          return (
            <Cell key={c} $align={d?.align} $bold={d?.bold} $box={d?.box} style={{ gridRow: r + 1, gridColumn: i + 2 }}>
              {d && <CellText $clip={d.clip}>{d.t}</CellText>}
              {d?.marks?.map(m => <ArrowMark key={m} side={m} />)}
            </Cell>
          );
        })}
      </React.Fragment>
    ))}
  </Grid>
);

export default function App() {
  return (
    <Screen>
      <Global />
      <TopBar>
        <Label $w={98} $ml={12} $ls={0.2} $color="#f0f0f0">Activities</Label>
        <I w={14} h={15}><path d="M1 0h8l4 4v10H1z" fill="#e4e4e4" /><path d={gridLines(3, 4.500, 8, 7.500, 3, 3)} stroke="#333" strokeWidth="1.200" /></I>
        <Label $w={112} $ml={7} $color="#f0f0f0">LibreOffice Calc</Label>
        <Caret w={10} h={6} c="#f0f0f0" />
        <Label $w={475} $ml={423} $size={14.1} $color="#f0f0f0">Oct 21&nbsp; 17:31</Label>
        <I w={17} h={17}><path d="M5 0q4 1 7 0 5 1 4 6 1 4 0 7-2 4-6 3-4 1-7 0-4-3-2-7-2-6 4-9z" fill="#62a81c" /><path d="M5 8l2.500 2.500L12 6" stroke="#fff" strokeWidth="2" /></I>
        <Label $w={20} $ml={23} $color="#f0f0f0">en</Label>
        <Slot $ml={-3} $drop={5}><Label $w={6} $size={9} $bold $color="#f0f0f0">1</Label></Slot>
        <Slot $ml={3}><Caret w={10} h={6} c="#f0f0f0" /></Slot>
        <Slot $ml={32}><I w={16} h={14}><path d="M5.500 0h5v4h-5zM0 9.500h5v4H0zM5.500 9.500h5v4h-5zM11 9.500h5v4h-5z" fill="#f0f0f0" /><path d="M8 4v6M2.500 10V7h11v3" stroke="#f0f0f0" /></I></Slot>
        <Slot $ml={13}><I w={16} h={15}><path d="M0 5h3l5-4v13l-5-4H0z" fill="#8b8b8b" /><path d="M10 5q2 2.500 0 5M12.500 2.500q3.500 5 0 10" stroke="#777" strokeWidth="1.300" /><path d="M1 14L13 1" stroke="#999" strokeWidth="1.500" /></I></Slot>
        <Slot $ml={12}><I w={14} h={15}><path d="M4 2.500A6 6 0 1 0 10 2.500M7 0v7" stroke="#f0f0f0" strokeWidth="1.400" /></I></Slot>
        <Slot $ml={12}><Caret w={10} h={6} c="#f0f0f0" /></Slot>
      </TopBar>
      <Desktop>
        <Dock>
          {[ChromeIcon, TerminalIcon, EditorIcon, FilesIcon, PyCharmIcon, FirefoxIcon, SkypeIcon, CalcIcon].map((Art, i) => (
            <DockItem key={i} $active={i === 7}>{i !== 5 && <RunDot />}<Art /></DockItem>
          ))}
          <DockItem $last><AppsIcon /></DockItem>
        </Dock>
        <Window>
          <TitleBar>
            <Label $w={800} $ml={404} $bold $size={14.47} $color="#fff">01_09_2024-30_09_2024 - 2024-10-21T173109.493.xls - LibreOffice Calc</Label>
            <I w={8} h={6}><path d="M0 4.500h8" stroke="#fff" /></I>
            <Slot $ml={26}><I w={8} h={9}><rect x=".5" y="2.500" width="5" height="5" stroke="#fff" /><path d="M2 .5h5.500v6" stroke="#aaa" /></I></Slot>
            <Slot $ml={3}><CloseButton><I w={8} h={8}><path d="M.5.5l7 7M7.500.5l-7 7" stroke="#fff" strokeWidth="1.700" /></I></CloseButton></Slot>
          </TitleBar>
          <MenuBar>
            <Slot $ml={8} />
            {menu.map(([t, w]) => <Label key={t} $w={w} $size={14.4}>{t}</Label>)}
            <Slot $ml={31}><I w={8} h={8}><path d="M.5.5l7 7M7.500.5l-7 7" stroke="#333" strokeWidth="1.300" /></I></Slot>
          </MenuBar>
          <MenuRule />
          <Toolbar $h={38}>
            <Grip />
            <Group $first={10}><Split><NewSheet /></Split><Split><Folder /></Split><Split><Save /></Split></Group>
            <Group><Pdf /><Printer /><Preview /></Group>
            <Group><Cut /><Copy /><Split><Paste /></Split></Group>
            <Group><Brush /><ClearFormat /></Group>
            <Group><Split dim><Undo /></Split><Split dim><Redo /></Split></Group>
            <Group><FindReplace /><Spell /></Group>
            <Group><Split><GreenTable mode="row" /></Split><Split><GreenTable mode="col" /></Split></Group>
            <Group><SortBoth /><SortAsc /><SortDesc /><Filter /></Group>
            <Group><Picture /><Chart /><Pivot /></Group>
            <Group><Split><Omega /></Split><Link /><Comment /><HeaderFooter /></Group>
            <Group><PrintArea /><Split><Freeze /></Split><SplitWin /></Group>
            <Group><Shapes /></Group>
          </Toolbar>
          <Toolbar $h={40}>
            <Grip />
            <Combo $w={144} $ml={6}><Label $w={90} $ml={11} $ls={0.5} $italic>Arial</Label><ComboButton $w={33}><Caret w={10} h={5} c={ink} /></ComboButton></Combo>
            <Combo $w={85} $ml={8}><Label $w={30} $ml={10} $size={14}>10</Label><ComboButton $w={33}><Caret w={10} h={5} c={ink} /></ComboButton></Combo>
            <Slot $ml={4} />
            <Group><Bold /><Italic /><Underline /></Group>
            <Group><Split><FontColor /></Split><Split><FillColor /></Split></Group>
            <Group><AlignL /><AlignC /><AlignR /></Group>
            <Group><Wrap /><Merge /></Group>
            <Group><VTop /><VMid /><VBot /></Group>
            <Group><Split><Currency /></Split><Percent /><NumberFmt /><DateFmt /></Group>
            <Group><AddDec /><DelDec /></Group>
            <Group><IndentIn /><IndentOut /></Group>
            <Group><Split><Borders /></Split><Split><LineStyle /></Split><Split><BorderColor /></Split></Group>
            <Group><Split><CondFmt /></Split></Group>
          </Toolbar>
          <Body>
            <Editor>
              <FormulaBar>
                <Combo $w={157} $ml={0}><Label $w={60} $ml={10} $size={13}>G18</Label><ComboButton $w={33}><Caret w={10} h={5} c={ink} /></ComboButton></Combo>
                <ThinSep $ml={4} />
                <Slot $ml={8}><I w={17} h={18}><text x="0" y="14" fontFamily="Open Sans" fontWeight="700" fontSize="17.500" fill="#454545">f</text><text x="7.500" y="16.500" fontFamily="Open Sans" fontWeight="700" fontSize="15" fill="#454545">x</text></I></Slot>
                <Slot $ml={8}><I w={12} h={15}><path d="M1 1h10v3.500H5.500L9 7.300l-3.500 3.200H11V14H1v-3l4-3.700L1 4z" fill="#454545" /></I></Slot>
                <Slot $ml={9} $drop={2}><Caret /></Slot>
                <Slot $ml={11}><I w={11} h={9}><path d="M0 1.500h11M0 6.500h11" stroke="#454545" strokeWidth="2.200" /></I></Slot>
                <FormulaInput />
                <Slot $ml={4}><Caret w={11} h={6} c={ink} /></Slot>
              </FormulaBar>
              <SheetRow>
                <Sheet />
                <VScroll><ScrollEnd $w={12} $h={7}><Tick $w={6} $h={1} /></ScrollEnd><VThumb /></VScroll>
              </SheetRow>
              <HScroll><HThumb /><ScrollEnd $w={5} $h={12}><Tick $w={1} $h={6} /></ScrollEnd></HScroll>
              <TabBar>
                <Slot $ml={14}><I w={10} h={15}><path d="M.5 0v15" stroke="#aeaeae" /><path d="M9.500 0v15L1.500 7.500z" fill="#aeaeae" /></I></Slot>
                <Slot $ml={15}><I w={8} h={15}><path d="M8 0v15L0 7.500z" fill="#aeaeae" /></I></Slot>
                <Slot $ml={17}><I w={8} h={15}><path d="M0 0v15l8-7.500z" fill="#aeaeae" /></I></Slot>
                <Slot $ml={16}><I w={11} h={15}><path d="M0 0v15l8-7.500zM9.500 0h1v15h-1z" fill="#aeaeae" /></I></Slot>
                <Slot $ml={17}><I w={17} h={17}><path d="M8.500 0v17M0 8.500h17" stroke="#3a3a3a" strokeWidth="3" /></I></Slot>
                <Tab><Label $w={110} $ml={13} $size={12.2}>Attendance Report</Label></Tab>
              </TabBar>
            </Editor>
            <Sidebar><Handle><I w={7} h={8}><path d="M6 0v8L1 4z" fill="#fff" /></I></Handle></Sidebar>
          </Body>
          <FindBar>
            <Grip />
            <Slot $ml={12}><I w={22} h={22}><circle cx="11" cy="11" r="10.500" fill="#dc3a43" stroke="#b3262e" /><path d="M7.500 7.500l7 7M14.500 7.500l-7 7" stroke="#fff" strokeWidth="2.200" /></I></Slot>
            <Combo $w={250} $ml={5}><Label $w={100} $ml={10} $color="#8b8b8b">Find</Label><ComboButton $w={33}><Caret w={10} h={5} c={ink} /></ComboButton></Combo>
            <Slot $ml={9}><I w={16} h={15}><path d="M8 15V3M1.500 8.500L8 2l6.500 6.500" stroke="#b5b5b5" strokeWidth="3.400" /></I></Slot>
            <Slot $ml={17}><I w={16} h={15}><path d="M8 0v12M1.500 6.500L8 13l6.500-6.500" stroke="#b5b5b5" strokeWidth="3.400" /></I></Slot>
            <Label $w={51} $ml={11} $size={12} $color="#8b8b8b">Find All</Label>
            <Check $ml={0} /><Label $w={132} $ml={7}>Formatted Display</Label>
            <Check $ml={0} /><Label $w={85} $ml={7}>Match Case</Label>
            <ThinSep $ml={0} $h={33} />
            <Slot $ml={9}><FindReplace /></Slot>
            <ThinSep $ml={7} $h={33} />
          </FindBar>
          <StatusBar>
            <Label $w={148} $ml={10} $size={12.1}>Sheet 1 of 1</Label>
            <ThinSep $ml={0} $h={14} />
            <ThinSep $ml={156} $h={14} />
            <Label $w={257} $ml={8} $size={12.2}>PageStyle_Attendance Report</Label>
            <ThinSep $ml={0} $h={14} />
            <Label $w={122} $ml={50} $size={11.8}>English (India)</Label>
            <ThinSep $ml={1} $h={14} />
            <ThinSep $ml={67} $h={14} />
            <Slot $ml={7}><I w={16} h={12}><path d="M0 .5h5M0 10.500h5M2.500 0v11M8.500 7v3.500h6V7" stroke="#777" /></I></Slot>
            <ThinSep $ml={5} $h={14} />
            <Slot $ml={8}><I w={13} h={11}><rect x=".5" y=".5" width="12" height="10" fill="#e9e9e9" stroke="#a9a9a9" /><path d="M5 1.500h3v3h2.500L6.500 9 2.500 4.500H5z" fill="#555" /></I></Slot>
            <ThinSep $ml={7} $h={14} />
            <ThinSep $ml={28} $h={14} />
            <Label $w={141} $ml={50} $size={11.8}>Average: ; Sum: 0</Label>
            <ThinSep $ml={0} $h={14} />
            <Slot $ml={9}><I w={9} h={9}><path d="M0 4.500h9" stroke="#777" /></I></Slot>
            <Slot $ml={6}><I w={97} h={12}><path d="M0 6h97" stroke="#8e8e8e" strokeWidth="1.600" /><circle cx="48" cy="6" r="4.500" fill="#efefef" stroke="#8e8e8e" /></I></Slot>
            <Slot $ml={5}><I w={9} h={9}><path d="M0 4.500h9M4.500 0v9" stroke="#777" /></I></Slot>
            <ThinSep $ml={7} $h={14} />
            <Label $w={40} $ml={7} $size={12}>100%</Label>
          </StatusBar>
        </Window>
      </Desktop>
    </Screen>
  );
}
